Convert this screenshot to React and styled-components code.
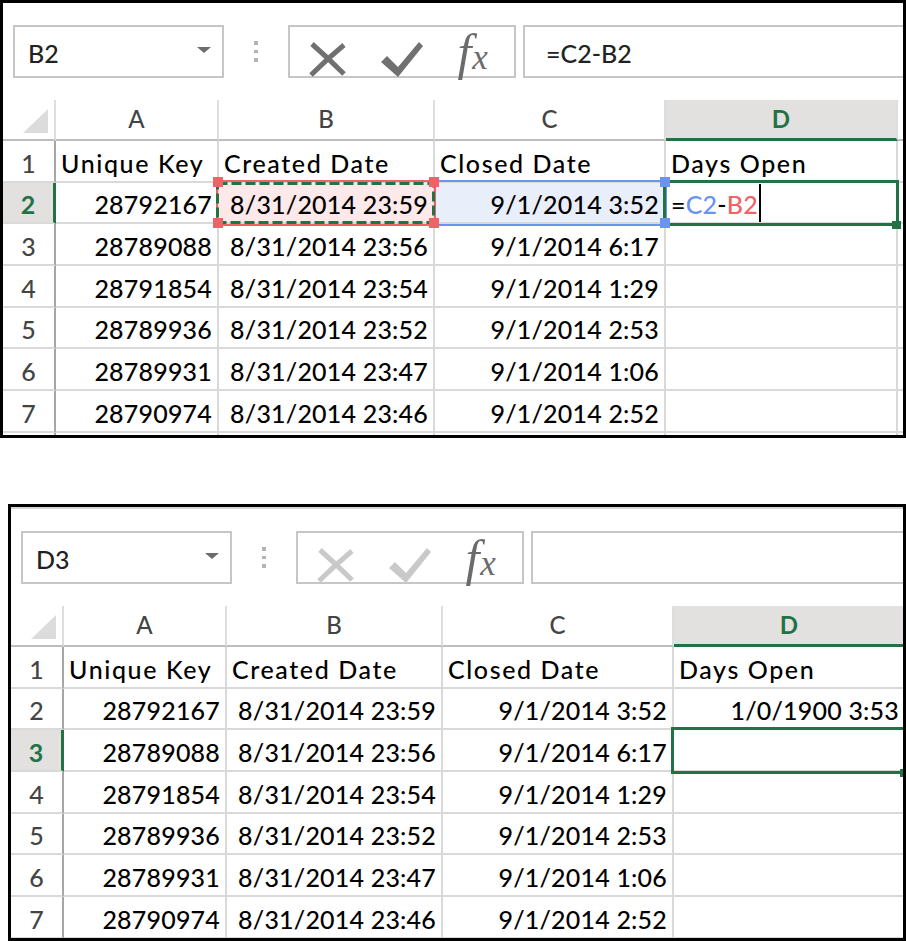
import { Fragment } from 'react';
import styled, { createGlobalStyle } from 'styled-components';

const GREEN = '#217346';
const RED = '#ef6367';
const BLUE = '#6a94ef';
const GRID = '#d9d9d9';

const GlobalStyle = createGlobalStyle`
  html, body { margin: 0; padding: 0; background: #fff; }
  body { font-family: Lato, "Liberation Sans", sans-serif; }
`;

const Page = styled.div`
  width: 906px;
  height: 941px;
  display: flex;
  flex-direction: column;
  gap: 66px;
  overflow: hidden;
`;

const Window = styled.section`
  box-sizing: border-box;
  width: ${({ $width }) => $width}px;
  height: ${({ $height }) => $height}px;
  margin-left: ${({ $offset }) => $offset || 0}px;
  border: 3px solid #000;
  background: #fff;
  overflow: hidden;
  display: flex;
  flex-direction: column;
  flex: none;
`;

const RibbonEdge = styled.div`
  flex: none;
  height: 2px;
  background: #d6d6d6;
`;

const Bar = styled.div`
  flex: none;
  display: flex;
  align-items: center;
  padding: 22px 0 22px 10px;
`;

const NameBox = styled.div`
  box-sizing: border-box;
  flex: none;
  width: 211px;
  height: 53px;
  border: 2px solid #c6c6c6;
  display: flex;
  align-items: center;
  justify-content: space-between;
  padding: 3px 11px 0 13px;
  font-size: 25px;
  font-weight: 500;
  color: #222;
`;

const Caret = styled.span`
  width: 0;
  height: 0;
  border-left: 7px solid transparent;
  border-right: 7px solid transparent;
  border-top: 6px solid #6c6c6c;
  margin-top: -6px;
`;

const Grip = styled.div`
  flex: none;
  width: 64px;
  display: flex;
  flex-direction: column;
  align-items: center;
  gap: 5px;

  span {
    width: 4px;
    height: 3.5px;
    background: #b3b3b3;
  }
`;

const Buttons = styled.div`
  box-sizing: border-box;
  flex: none;
  width: 228px;
  height: 53px;
  border: 2px solid #c6c6c6;
  display: grid;
  grid-template-columns: repeat(3, 1fr);
  align-items: center;
  justify-items: center;
`;

const Fx = styled.span`
  display: flex;
  align-items: baseline;
  margin: 0 8px 14px 0;
  font-family: "Liberation Serif", "DejaVu Serif", serif;
  font-style: italic;
  font-size: 50px;
  line-height: 1;
  color: #6b6b6b;

  i {
    font-size: 35px;
    margin-left: 1px;
  }
`;

const FormulaInput = styled.div`
  box-sizing: border-box;
  flex: 1;
  height: 53px;
  margin: 0 -10px 0 7px;
  border: 2px solid #c6c6c6;
  display: flex;
  align-items: center;
  padding: 3px 0 0 21px;
  font-size: 25px;
  font-weight: 500;
  color: #222;
`;

const Grid = styled.div`
  flex: none;
  display: grid;
  grid-template-columns: 53px 163px 216px 231px 232px 40px;
  grid-template-rows: 41px repeat(8, 41.7px);
`;

const Corner = styled.div`
  box-sizing: border-box;
  border-right: 2px solid #dedede;
  border-bottom: 2px solid #bdbdbd;
  display: flex;
  align-items: flex-end;
  justify-content: flex-end;
  padding: 0 6px 6px 0;

  &::after {
    content: '';
    width: 25px;
    height: 24px;
    background: #dcdcdc;
    clip-path: polygon(100% 0, 100% 100%, 0 100%);
  }
`;

const ColHead = styled.div`
  box-sizing: border-box;
  border-right: 2px solid #dedede;
  border-bottom: ${({ $active }) => ($active ? `3px solid ${GREEN}` : '2px solid #bdbdbd')};
  background: ${({ $active }) => ($active ? '#e3e0e0' : '#fff')};
  color: ${({ $active }) => ($active ? GREEN : '#444')};
  font-weight: ${({ $active }) => ($active ? 700 : 500)};
  display: flex;
  align-items: flex-end;
  justify-content: center;
  padding-bottom: ${({ $active }) => ($active ? 5 : 6)}px;
  font-size: 24px;
  line-height: 28px;
`;

const RowHead = styled.div`
  box-sizing: border-box;
  border-right: ${({ $active }) => ($active ? `3px solid ${GREEN}` : '2px solid #a6a6a6')};
  border-bottom: 2px solid ${GRID};
  background: ${({ $active }) => ($active ? '#e3e0e0' : '#fff')};
  color: ${({ $active }) => ($active ? GREEN : '#444')};
  font-weight: ${({ $active }) => ($active ? 700 : 500)};
  display: flex;
  align-items: flex-end;
  justify-content: center;
  padding-bottom: 3px;
  font-size: 25px;
  line-height: 30px;
`;

const Cell = styled.div`
  position: relative;
  box-sizing: border-box;
  border-right: 2px solid ${GRID};
  border-bottom: 2px solid ${GRID};
  background: ${({ $bg }) => $bg || '#fff'};
  display: flex;
  align-items: flex-end;
  justify-content: ${({ $right }) => ($right ? 'flex-end' : 'flex-start')};
  padding: 0 5px 3px;
  font-size: 25px;
  font-weight: 500;
  line-height: 30px;
  letter-spacing: ${({ $label }) => ($label ? '1.6px' : '0.2px')};
  color: #000;
  white-space: nowrap;
`;

const RangeFrame = styled.div`
  position: absolute;
  z-index: 2;
  top: -3px;
  bottom: -4px;
  left: ${({ $left }) => $left ?? -3}px;
  right: -3px;
  border: 2px solid ${({ $color }) => $color};
  ${({ $open }) => $open && 'border-left: none;'}
  pointer-events: none;
`;

const ActiveFrame = styled.div`
  position: absolute;
  z-index: 2;
  top: -3px;
  bottom: -4px;
  left: -3px;
  right: -3px;
  border: 3px solid ${GREEN};
  pointer-events: none;
`;

const Knob = styled.span`
  position: absolute;
  z-index: 3;
  width: 10px;
  height: 10px;
  background: ${({ $color }) => $color};
  ${({ $y }) => $y}: -6px;
  ${({ $x }) => $x}: -6px;
`;

const FillHandle = styled.span`
  position: absolute;
  z-index: 3;
  width: 9px;
  height: 8px;
  right: -5px;
  bottom: -7px;
  background: ${GREEN};
`;

const Marquee = styled.svg`
  position: absolute;
  z-index: 2;
  left: -3px;
  top: -1px;
  overflow: visible;
`;

const Ref = styled.span`
  color: ${({ $color }) => $color};
`;

const TextCursor = styled.span`
  align-self: stretch;
  width: 2px;
  margin: 1px 0 -3px 1px;
  background: #000;
`;

function CancelIcon({ color }) {
  return (
    <svg width="37" height="35" viewBox="0 0 37 35">
      <path d="M3 2 Q19 16 35 32 M35 3 Q18 17 2 33" stroke={color} strokeWidth="5" fill="none" />
    </svg>
  );
}

function EnterIcon({ color }) {
  return (
    <svg width="42" height="35" viewBox="0 0 42 35">
      <polygon points="0,20 17,35 42,4 38,0 17,25 6,14" fill={color} />
    </svg>
  );
}

function FormulaBar({ name, formula, enabled }) {
  const tone = enabled ? '#707070' : '#c9c9c9';
  return (
    <Bar>
      <NameBox>
        <span>{name}</span>
        <Caret />
      </NameBox>
      <Grip>
        <span />
        <span />
        <span />
      </Grip>
      <Buttons>
        <CancelIcon color={tone} />
        <EnterIcon color={tone} />
        <Fx>
          f<i>x</i>
        </Fx>
      </Buttons>
      <FormulaInput>{formula}</FormulaInput>
    </Bar>
  );
}

// column E only peeks in at the right edge, so its letter stays hidden
const COLS = ['A', 'B', 'C', 'D', 'E'];
const HEADER = ['Unique Key', 'Created Date', 'Closed Date', 'Days Open'];
const RECORDS = [
  ['28792167', '8/31/2014 23:59', '9/1/2014 3:52'],
  ['28789088', '8/31/2014 23:56', '9/1/2014 6:17'],
  ['28791854', '8/31/2014 23:54', '9/1/2014 1:29'],
  ['28789936', '8/31/2014 23:52', '9/1/2014 2:53'],
  ['28789931', '8/31/2014 23:47', '9/1/2014 1:06'],
  ['28790974', '8/31/2014 23:46', '9/1/2014 2:52'],
];

function Sheet({ activeRow, activeCol, decorate }) {
  const rows = [HEADER, ...RECORDS, []];
  return (
    <Grid>
      <Corner />
      {COLS.map((col) => (
        <ColHead key={col} $active={col === activeCol}>
          {col === 'E' ? '' : col}
        </ColHead>
      ))}
      {rows.map((values, i) => {
        const r = i + 1;
        const spill = r === rows.length;
        return (
          <Fragment key={r}>
            <RowHead $active={r === activeRow}>{spill ? '' : r}</RowHead>
            {COLS.map((col, j) => {
              const d = decorate(col + r) || {};
              return (
                <Cell key={col} $right={d.right ?? r > 1} $label={r === 1} $bg={d.bg}>
                  {d.content ?? values[j]}
                  {d.over}
                </Cell>
              );
            })}
          </Fragment>
        );
      })}
    </Grid>
  );
}

const topDecor = (ref) => {
  switch (ref) {
    case 'B2':
      return {
        bg: '#fde9e9',
        over: (
          <>
            <RangeFrame $color={RED} />
            <Marquee width="219" height="42">
              <rect x="1.5" y="1.5" width="216" height="39" fill="none" stroke={GREEN} strokeWidth="3" strokeDasharray="10 4" />
            </Marquee>
            <Knob $color={RED} $y="top" $x="left" />
            <Knob $color={RED} $y="top" $x="right" />
            <Knob $color={RED} $y="bottom" $x="left" />
            <Knob $color={RED} $y="bottom" $x="right" />
          </>
        ),
      };
    case 'C2':
      return {
        bg: '#e9eefb',
        over: (
          <>
            <RangeFrame $color={BLUE} $left={-1} $open />
            <Knob $color={BLUE} $y="top" $x="right" />
            <Knob $color={BLUE} $y="bottom" $x="right" />
          </>
        ),
      };
    case 'D2':
      return {
        right: false,
        content: (
          <>
            <span>
              =<Ref $color={BLUE}>C2</Ref>-<Ref $color={RED}>B2</Ref>
            </span>
            <TextCursor />
          </>
        ),
        over: (
          <>
            <ActiveFrame />
            <FillHandle />
          </>
        ),
      };
    default:
      return null;
  }
};

const bottomDecor = (ref) => {
  if (ref === 'D2') return { content: '1/0/1900 3:53' };
  if (ref === 'D3')
    return {
      over: (
        <>
          <ActiveFrame />
          <FillHandle />
        </>
      ),
    };
  return null;
};

export default function App() {
  return (
    <>
      <GlobalStyle />
      <Page>
        <Window $width={906} $height={438}>
          <FormulaBar name="B2" formula="=C2-B2" enabled />
          <Sheet activeRow={2} activeCol="D" decorate={topDecor} />
        </Window>
        <Window $width={898} $height={437} $offset={8}>
          <RibbonEdge />
          <FormulaBar name="D3" formula="" />
          <Sheet activeRow={3} activeCol="D" decorate={bottomDecor} />
        </Window>
      </Page>
    </>
  );
}
